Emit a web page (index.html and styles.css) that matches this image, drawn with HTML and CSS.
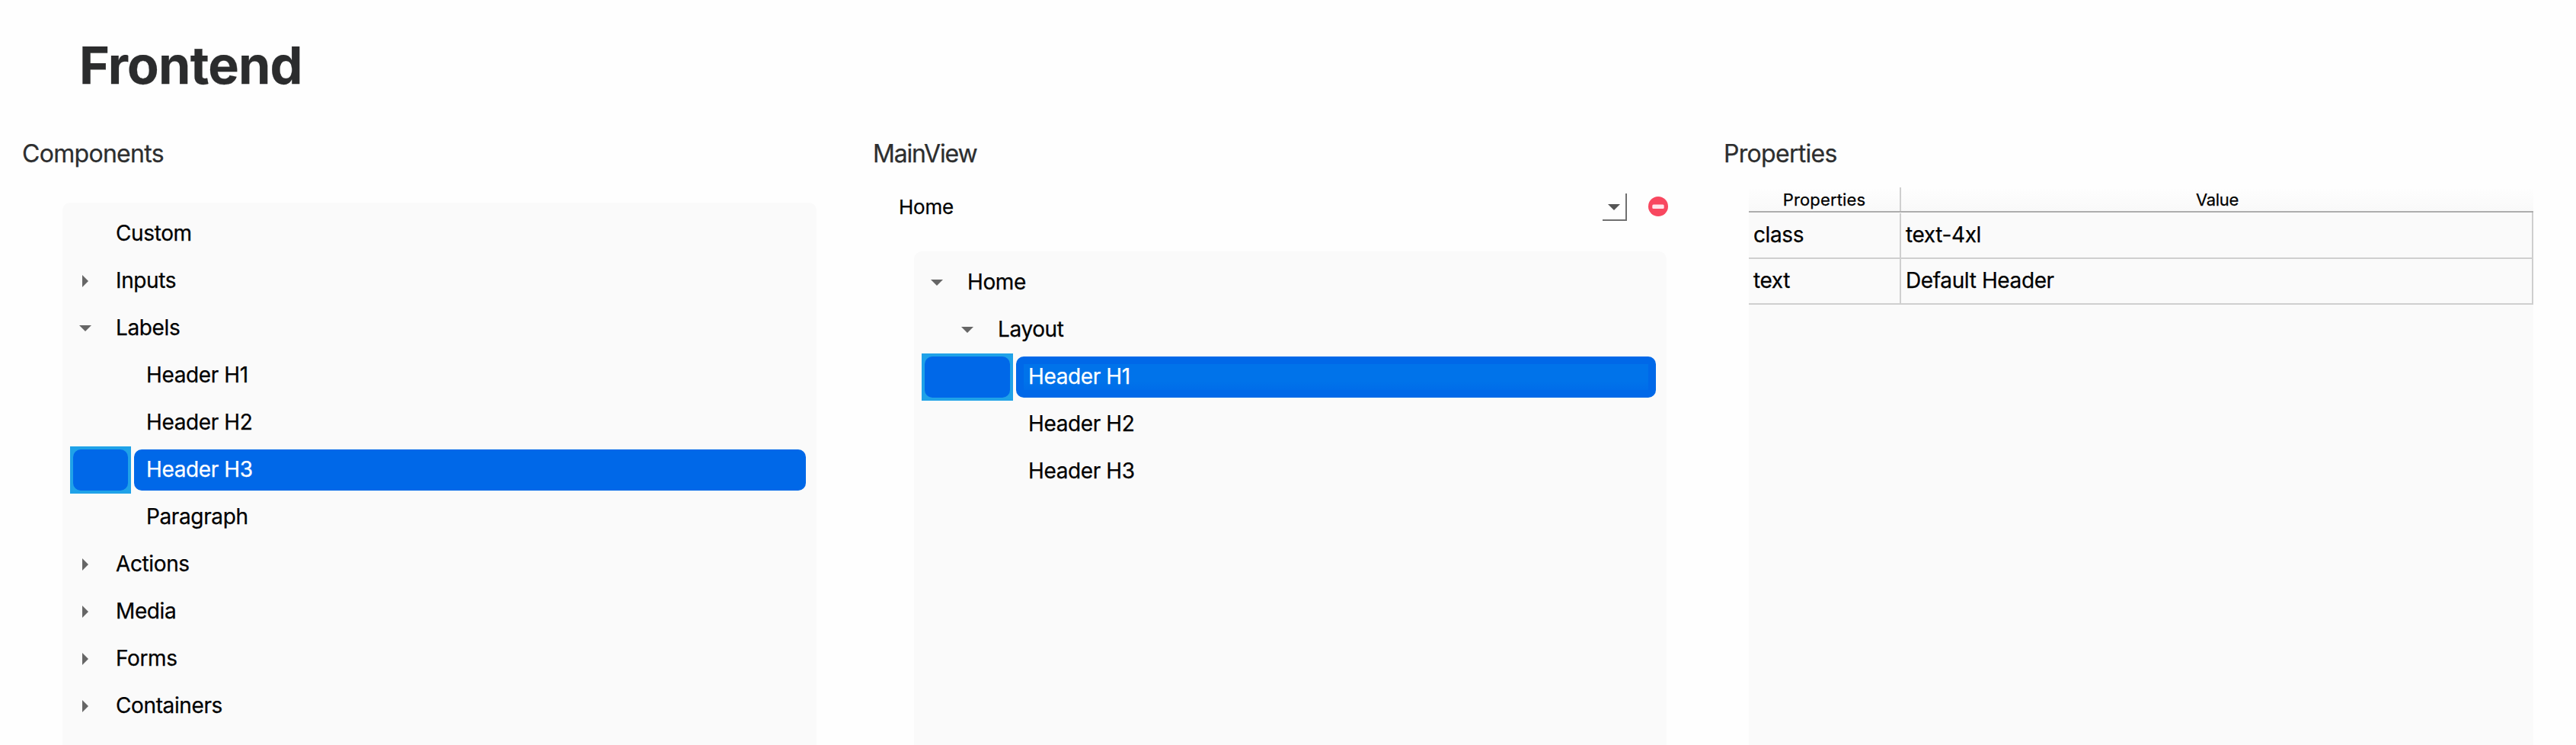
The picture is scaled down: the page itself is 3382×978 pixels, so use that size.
FILE: index.html
```html
<!DOCTYPE html>
<html lang="en">
<head>
<meta charset="utf-8">
<title>Frontend</title>
<link rel="stylesheet" href="styles.css">
</head>
<body>
<svg class="defs" width="0" height="0">
  <symbol id="closed" viewBox="0 0 16 16"><path d="M4 0 12 8 4 16z"/></symbol>
  <symbol id="open" viewBox="0 0 16 16"><path d="M0 4H16L8 12z"/></symbol>
</svg>
<h1 class="title">Frontend</h1>
<main class="columns">
  <section class="column">
    <h2 class="heading">Components</h2>
    <ul class="tree tree-components">
      <li class="row"><span class="branch"></span><span class="label">Custom</span></li>
      <li class="row"><span class="branch"><svg class="arrow"><use href="#closed"/></svg></span><span class="label">Inputs</span></li>
      <li class="row"><span class="branch"><svg class="arrow"><use href="#open"/></svg></span><span class="label">Labels</span></li>
      <li class="row"><span class="branch level-1"></span><span class="label">Header H1</span></li>
      <li class="row"><span class="branch level-1"></span><span class="label">Header H2</span></li>
      <li class="row selected"><span class="branch level-1"><span class="fill"></span></span><span class="label">Header H3</span></li>
      <li class="row"><span class="branch level-1"></span><span class="label">Paragraph</span></li>
      <li class="row"><span class="branch"><svg class="arrow"><use href="#closed"/></svg></span><span class="label">Actions</span></li>
      <li class="row"><span class="branch"><svg class="arrow"><use href="#closed"/></svg></span><span class="label">Media</span></li>
      <li class="row"><span class="branch"><svg class="arrow"><use href="#closed"/></svg></span><span class="label">Forms</span></li>
      <li class="row"><span class="branch"><svg class="arrow"><use href="#closed"/></svg></span><span class="label">Containers</span></li>
    </ul>
  </section>
  <section class="column">
    <h2 class="heading heading-tight">MainView</h2>
    <div class="picker">
      <span class="picker-value">Home</span>
      <span class="picker-button"><svg class="arrow"><use href="#open"/></svg></span>
      <svg class="remove" viewBox="0 0 26 26"><circle cx="13" cy="13" r="13" fill="#f8475f"/><rect x="5.3" y="10.5" width="15.4" height="5.4" rx="1.5" fill="#ffe4ea"/></svg>
    </div>
    <ul class="tree tree-view">
      <li class="row"><span class="branch"><svg class="arrow"><use href="#open"/></svg></span><span class="label">Home</span></li>
      <li class="row"><span class="branch level-1"><svg class="arrow"><use href="#open"/></svg></span><span class="label">Layout</span></li>
      <li class="row selected focused"><span class="branch level-2"><span class="fill"></span></span><span class="label">Header H1</span></li>
      <li class="row"><span class="branch level-2"></span><span class="label">Header H2</span></li>
      <li class="row"><span class="branch level-2"></span><span class="label">Header H3</span></li>
    </ul>
  </section>
  <section class="column">
    <h2 class="heading">Properties</h2>
    <div class="table">
      <div class="table-head"><span class="head-name">Properties</span><span class="head-value">Value</span></div>
      <div class="table-row"><span class="cell-name">class</span><span class="cell-value">text-4xl</span></div>
      <div class="table-row"><span class="cell-name">text</span><span class="cell-value">Default Header</span></div>
    </div>
  </section>
</main>
</body>
</html>
```

FILE: styles.css
```css
* { box-sizing: border-box; }

body {
  margin: 0;
  height: 978px;
  padding: 44px 56px 0 29px;
  display: flex;
  flex-direction: column;
  overflow: hidden;
  background: #fefefe;
  color: #000;
  font-family: Inter, "Liberation Sans", sans-serif;
  font-size: 28px;
  font-weight: 400;
  letter-spacing: -0.38px;
  -webkit-text-stroke: 0.25px currentColor;
}

.defs { display: block; flex: none; height: 0; }

.title {
  margin: 0 0 55px 75px;
  font-size: 68px;
  line-height: 82px;
  font-weight: 700;
  letter-spacing: -0.75px;
  color: #2b2c2d;
}

.columns {
  flex: 1;
  display: grid;
  grid-template-columns: 1117px 1117px 1fr;
}

.column { display: flex; flex-direction: column; }

.heading {
  margin: 0;
  font-size: 32px;
  line-height: 41px;
  height: 40px;
  font-weight: 400;
  letter-spacing: -0.7px;
  color: #2d2e2f;
}
.heading-tight { letter-spacing: -1.2px; }

.tree {
  flex: 1;
  margin: 0;
  padding: 10px 10px 0;
  list-style: none;
  background: #fafafa;
  border-radius: 10px 10px 0 0;
}
.tree-components { margin: 45px 0 0 53px; width: 990px; }
.tree-view { margin: 34px 0 0 54px; width: 988px; }

.row { display: flex; height: 62px; line-height: 61px; }

.branch {
  flex: none;
  width: 40px;
  display: flex;
  justify-content: flex-end;
  align-items: center;
  padding: 0 12px;
}
.level-1 { width: 80px; }
.level-2 { width: 120px; }

.arrow { width: 16px; height: 16px; fill: #666; }

.label { flex: 1; padding-left: 20px; white-space: nowrap; }

.selected .branch { padding: 4px; background: #1fa2e8; }
.fill {
  flex: 1;
  align-self: stretch;
  border-radius: 10px;
  background: #0068e8;
}
.selected .label {
  margin: 4px;
  padding-left: 16px;
  line-height: 53px;
  border-radius: 10px;
  background: #0068e8;
  color: #fff;
}
.focused .label {
  background:
    linear-gradient(#0073ea, #0073ea 66%, #006de9) 10px 10px / calc(100% - 20px) 34px no-repeat,
    #0068e8;
}

.picker {
  height: 48px;
  margin: 27px 0 0 33px;
  display: flex;
  align-items: flex-start;
  width: 1011px;
  line-height: 48px;
}
.picker-value { flex: 1; padding-left: 1px; font-size: 26px; letter-spacing: -0.25px; }
.picker-button {
  width: 32px;
  height: 36px;
  margin: 6px 28px 0 0;
  padding: 10px 7px 0;
  line-height: 0;
  border-right: 2px solid #707070;
  border-bottom: 2px solid #707070;
}
.picker-button .arrow { fill: #555; }
.remove { width: 26px; height: 26px; margin-top: 10px; }

.table {
  flex: 1;
  margin: 25px 0 0 33px;
  width: 1030px;
  background: #fafafa;
}
.table-head {
  display: flex;
  height: 33px;
  line-height: 33px;
  border-bottom: 2px solid #adadad;
  background: linear-gradient(#fefefe, #f9f9f9);
  font-size: 22px;
  letter-spacing: 0.15px;
  text-align: center;
}
.head-name { width: 200px; border-right: 2px solid #cfcfcf; }
.head-value { flex: 1; letter-spacing: -0.3px; }
.table-row {
  display: flex;
  height: 60px;
  padding-top: 1px;
  line-height: 57px;
  border-bottom: 2px solid #cfcfcf;
  border-right: 2px solid #cfcfcf;
}
.table-row + .table-row { padding-top: 0; }
.table-head + .table-row { height: 61px; }
.cell-name { width: 200px; padding-left: 6px; border-right: 2px solid #cfcfcf; }
.cell-value { padding-left: 6px; }
```
